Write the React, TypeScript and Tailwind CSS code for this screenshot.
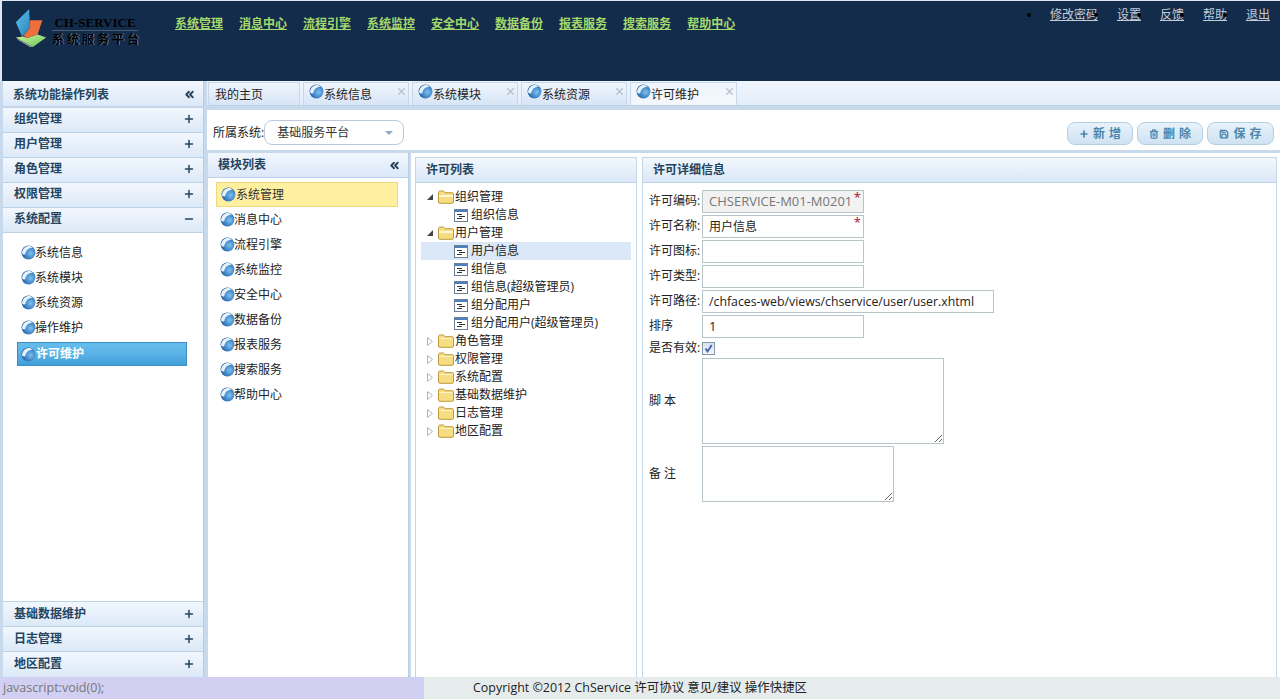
import { useId } from "react";
import type { ReactNode } from "react";
import { ChevronsLeft, Plus, Minus, X, Trash2, Save } from "lucide-react";

function Ball({ size = 15 }: { size?: number }) {
  const id = useId();
  return (
    <svg width={size} height={size} viewBox="0 0 16 16" className="shrink-0">
      <defs>
        <radialGradient id={id} cx="0.65" cy="0.55" r="0.7">
          <stop offset="0" stopColor="#7fc0ee" />
          <stop offset="0.55" stopColor="#3f86c8" />
          <stop offset="1" stopColor="#1d4f8e" />
        </radialGradient>
      </defs>
      <circle cx="8" cy="8" r="7.4" fill={`url(#${id})`} />
      <path d="M1.2 9C1 5 4 1.2 8 1c2 0 3.6.7 4.6 2C9.5 3 5.500 4.500 4.600 9.500 3.500 10.500 2 10.200 1.200 9Z" fill="#e6f2fb" />
    </svg>
  );
}

function Folder({ open }: { open?: boolean }) {
  return (
    <svg width="16" height="14" viewBox="0 0 16 14" className="shrink-0">
      <path d="M.5 3V12c0 .8.5 1.300 1.300 1.300h12.400c.8 0 1.300-.5 1.300-1.300V3.800c0-.7-.5-1.100-1.200-1.100H7L5.600 1H2C1 1 .5 1.800.5 3Z" fill="#f6dc83" stroke="#bd9a3c" />
      {open ? <path d="M1 6h14" stroke="#fff6cf" strokeWidth="2" /> : <path d="M1.500 4.500h13" stroke="#fdf3c6" />}
    </svg>
  );
}

function Leaf() {
  return (
    <svg width="14" height="13" viewBox="0 0 14 13" className="shrink-0">
      <rect x=".5" y=".5" width="13" height="12" fill="#fff" stroke="#6b7f96" />
      <rect x="1" y="1" width="12" height="2" fill="#4b7fbe" />
      <path d="M3 5.500h5M5 7.500h6M3 9.500h5" stroke="#333" />
    </svg>
  );
}

function Logo() {
  return (
    <svg width="36" height="40" viewBox="0 0 38 42" className="shrink-0">
      <defs>
        <linearGradient id="lgb" x1="0" y1="0" x2="1" y2="1">
          <stop offset="0" stopColor="#5cc6f0" />
          <stop offset="1" stopColor="#2c7fb8" />
        </linearGradient>
        <linearGradient id="lgg" x1="0" y1="0" x2="1" y2="1">
          <stop offset="0" stopColor="#d5f59a" />
          <stop offset="1" stopColor="#62c45c" />
        </linearGradient>
      </defs>
      <path d="M3 16 17 2 18 22 9.500 31Z" fill="url(#lgb)" />
      <path d="M18 14H31L26 29 15 33 11 30 18 22Z" fill="#ec6f3c" />
      <path d="M3 32 11 31 15 33 26 29 35 32 21 42Z" fill="url(#lgg)" />
      <path d="M3 32 21 42V44L6 35Z" fill="#8ca3a0" />
    </svg>
  );
}

const navs = ["系统管理", "消息中心", "流程引擎", "系统监控", "安全中心", "数据备份", "报表服务", "搜索服务", "帮助中心"];
const tops = ["修改密码", "设置", "反馈", "帮助", "退出"];

function Header() {
  return (
    <header className="h-[81px] bg-[#132c4b] border-t border-l-2 border-[#dfe6ee] flex shrink-0">
      <div className="w-[173px] flex items-start pl-[11px] pt-[6px] shrink-0">
        <Logo />
        <div className="ml-[3px] pt-[9px] w-[86px] font-['Liberation_Serif','Noto_Sans_CJK_SC',serif]">
          <div className="text-[13px] leading-[14px] font-bold text-black text-center border-b border-[#4a5c72]">CH-SERVICE</div>
          <div className="text-[12px] leading-[15px] mt-[2px] font-bold tracking-[3px] text-black whitespace-nowrap [text-shadow:1px_0_0_#ffffff66]">系统服务平台</div>
        </div>
      </div>
      <nav className="flex gap-4 pt-[15px] h-fit">
        {navs.map((n) => (
          <a key={n} className="text-[12px] leading-[16px] font-bold text-[#a5d96b] underline">{n}</a>
        ))}
      </nav>
      <ul className="ml-auto flex list-disc gap-[11px] pr-[10px] pt-[6px] h-fit text-black">
        {tops.map((t) => (
          <li key={t} className="text-[12px] leading-[16px]">
            <a className="ml-[8px] text-[#c3ccd6] underline">{t}</a>
          </li>
        ))}
      </ul>
    </header>
  );
}

function PanelHead({ title, chev, right }: { title: string; chev?: boolean; right?: boolean }) {
  return (
    <div className="h-[25px] shrink-0 flex items-center justify-between bg-gradient-to-b from-[#f2f7fd] to-[#dae8f8] border-b border-[#bcd3e6] pl-[10px] pr-[7px]">
      <span className={`text-[12px] font-bold text-[#24445e] ${right ? "" : ""}`}>{title}</span>
      {chev && <ChevronsLeft size={13} strokeWidth={3.5} className="text-[#24445e]" />}
    </div>
  );
}

function AccRow({ title, open, up }: { title: string; open?: boolean; up?: boolean }) {
  return (
    <div className={`h-[25px] shrink-0 flex items-center justify-between bg-gradient-to-b from-[#f2f7fd] to-[#dce9f8] border-b border-[#bcd3e6] pl-[11px] pr-[8px] ${up ? "pb-[2px]" : ""}`}>
      <span className="text-[12px] font-bold text-[#24445e]">{title}</span>
      {open ? <Minus size={12} strokeWidth={3} className="text-[#24445e]" /> : <Plus size={12} strokeWidth={3} className="text-[#24445e]" />}
    </div>
  );
}

function Sidebar() {
  const items = ["系统信息", "系统模块", "系统资源", "操作维护"];
  return (
    <aside className="w-[201px] ml-[3px] shrink-0 flex flex-col bg-white border-r border-[#b8cde2]">
      <div className="h-[27px] shrink-0 flex items-center justify-between bg-gradient-to-b from-[#f2f7fd] to-[#dce9f8] border-b-2 border-[#c3d6ea] pl-[10px] pr-[7px] pt-[2px]">
        <span className="text-[12px] font-bold text-[#24445e]">系统功能操作列表</span>
        <ChevronsLeft size={13} strokeWidth={3.5} className="text-[#24445e]" />
      </div>
      {["组织管理", "用户管理", "角色管理", "权限管理"].map((t) => (
        <AccRow key={t} title={t} up />
      ))}
      <AccRow title="系统配置" open up />
      <div className="flex-1 pt-[7px] pl-[14px] pr-[16px] flex flex-col">
        {items.map((t) => (
          <div key={t} className="h-[25px] flex items-center pl-[4px] text-[12px] text-[#222]">
            <Ball />
            <span className="-ml-[1px]">{t}</span>
          </div>
        ))}
        <div className="h-[24px] mt-[2px] flex items-center pl-[3px] text-[12px] font-bold text-white bg-gradient-to-b from-[#66bdec] via-[#5ab2e6] to-[#3f9fda] border border-[#3c8fc6]">
          <Ball />
          <span>许可维护</span>
        </div>
      </div>
      <div className="border-t border-[#bcd3e6] flex flex-col">
        <AccRow title="基础数据维护" />
        <AccRow title="日志管理" />
        <div className="h-[25px] shrink-0 flex items-center justify-between bg-gradient-to-b from-[#f2f7fd] to-[#dce9f8] pl-[11px] pr-[8px] pb-[1px]">
          <span className="text-[12px] font-bold text-[#24445e]">地区配置</span>
          <Plus size={12} strokeWidth={3} className="text-[#24445e]" />
        </div>
      </div>
    </aside>
  );
}

function Tab({ title, icon = true, active, w }: { title: string; icon?: boolean; active?: boolean; w: string }) {
  return (
    <div className={`${w} relative h-[23px] flex items-center shrink-0 border border-b-0 border-[#c6d8ea] ${icon ? "pl-[5px]" : "pl-[6px]"} ${active ? "bg-gradient-to-b from-[#eff5fc] to-[#f4f8fd]" : "bg-gradient-to-b from-[#f0f5fc] to-[#d7e5f6]"}`}>
      {icon && (
        <span className="-mt-[6px] shrink-0">
          <Ball />
        </span>
      )}
      <span className="text-[12px] text-[#222] mt-[1px]">{title}</span>
      {icon && <X size={11} strokeWidth={3} className="absolute right-[1px] top-[3px] text-[#b4c3cf]" />}
    </div>
  );
}

function Btn({ label, icon, w }: { label: string; icon: ReactNode; w: string }) {
  return (
    <button className={`${w} h-[23px] flex items-center justify-center gap-[4px] rounded-lg border border-[#b3cfe0] bg-gradient-to-b from-[#e8f2fb] to-[#cfe2f2] text-[12px] font-bold text-[#4a86ab] tracking-[4px]`}>
      {icon}
      <span className="-mr-[4px]">{label}</span>
    </button>
  );
}

function Toolbar() {
  return (
    <div className="h-[40px] shrink-0 bg-white flex items-center pl-[6px] pr-[6px] mt-[4px]">
      <span className="text-[12px] text-[#222] mt-[6px]">所属系统:</span>
      <div className="w-[140px] h-[25px] mt-[5px] flex items-center justify-between rounded-lg border border-[#b9cbdb] bg-white pl-[12px] pr-[10px]">
        <span className="text-[12px] text-[#333]">基础服务平台</span>
        <span className="w-0 h-0 border-x-[4px] border-x-transparent border-t-[4px] border-t-[#8ea9bf]" />
      </div>
      <div className="ml-auto flex gap-[4px] mt-[7px]">
        <Btn w="w-[66px]" label="新增" icon={<Plus size={10} strokeWidth={4} />} />
        <Btn w="w-[66px]" label="删除" icon={<Trash2 size={10} strokeWidth={3} />} />
        <Btn w="w-[67px]" label="保存" icon={<Save size={10} strokeWidth={3} />} />
      </div>
    </div>
  );
}

function ModuleList() {
  const list = ["消息中心", "流程引擎", "系统监控", "安全中心", "数据备份", "报表服务", "搜索服务", "帮助中心"];
  return (
    <section className="w-[201px] shrink-0 flex flex-col bg-white border-r border-[#b8cde2]">
      <PanelHead title="模块列表" chev />
      <div className="pt-[4px] px-[8px] flex flex-col">
        <div className="h-[25px] w-[182px] flex items-center pl-[4px] bg-[#fff0a0] border border-[#f0d97c] text-[12px] text-[#333]">
          <Ball />
          <span>系统管理</span>
        </div>
        {list.map((t) => (
          <div key={t} className="h-[25px] flex items-center pl-[4px] text-[12px] text-[#222]">
            <Ball />
            <span className="-ml-[1px]">{t}</span>
          </div>
        ))}
      </div>
    </section>
  );
}

function TreeFolder({ title, open }: { title: string; open?: boolean }) {
  return (
    <div className="h-[18px] flex items-center pl-[6px]">
      {open ? (
        <span className="w-0 h-0 border-l-[6px] border-l-transparent border-b-[6px] border-b-[#444] mr-[5px]" />
      ) : (
        <svg width="6" height="9" viewBox="0 0 6 9" className="mr-[5px]">
          <path d="M.5.5 5.500 4.500.5 8.500Z" fill="#fff" stroke="#aab4bd" />
        </svg>
      )}
      <Folder open={open} />
      <span className="ml-[1px] text-[12px] text-[#222]">{title}</span>
    </div>
  );
}

function TreeLeaf({ title, sel }: { title: string; sel?: boolean }) {
  return (
    <div className={`h-[18px] flex items-center pl-[33px] ${sel ? "bg-[#dbe8f8]" : ""}`}>
      <Leaf />
      <span className="ml-[3px] text-[12px] text-[#222]">{title}</span>
    </div>
  );
}

function Tree() {
  return (
    <section className="w-[222px] ml-[4px] mt-[4px] shrink-0 flex flex-col bg-white border border-[#c3d6e8] border-b-0">
      <PanelHead title="许可列表" right />
      <div className="pt-[5px] pl-[5px] pr-[5px] flex flex-col">
        <TreeFolder title="组织管理" open />
        <TreeLeaf title="组织信息" />
        <TreeFolder title="用户管理" open />
        <TreeLeaf title="用户信息" sel />
        <TreeLeaf title="组信息" />
        <TreeLeaf title="组信息(超级管理员)" />
        <TreeLeaf title="组分配用户" />
        <TreeLeaf title="组分配用户(超级管理员)" />
        {["角色管理", "权限管理", "系统配置", "基础数据维护", "日志管理", "地区配置"].map((t) => (
          <TreeFolder key={t} title={t} />
        ))}
      </div>
    </section>
  );
}

function Field({ label, value, wide, req, disabled, size = "text-[12px]" }: { label: string; value?: string; wide?: boolean; req?: boolean; disabled?: boolean; size?: string }) {
  return (
    <div className="flex items-center h-[23px]">
      <span className="w-[53px] shrink-0 pt-[2px] text-[12px] text-[#222]">{label}</span>
      <div className={`relative ${wide ? "w-[292px]" : "w-[162px]"} h-[23px]`}>
        <input
          readOnly
          value={value ?? ""}
          className={`w-full h-full border border-[#b7c5cb] pl-[6px] ${size} outline-none ${disabled ? "bg-[#f2f2f2] text-[#777]" : "bg-white text-[#222]"}`}
        />
        {req && <span className="absolute right-[3px] top-[2px] text-[13px] leading-[14px] text-[#a01030]">*</span>}
      </div>
    </div>
  );
}

function Detail() {
  return (
    <section className="flex-1 ml-[5px] mr-[3px] mt-[4px] flex flex-col bg-white border-l border-t border-r border-[#c3d6e8] min-w-0">
      <PanelHead title="许可详细信息" right />
      <div className="pt-[5px] pl-[6px] flex flex-col gap-[2px]">
        <Field label="许可编码:" value="CHSERVICE-M01-M0201" req disabled size="text-[13px]" />
        <Field label="许可名称:" value="用户信息" req />
        <Field label="许可图标:" />
        <Field label="许可类型:" />
        <Field label="许可路径:" value="/chfaces-web/views/chservice/user/user.xhtml" wide size="text-[12.3px]" />
        <Field label="排序" value="1" size="text-[13px]" />
        <div className="flex items-center h-[16px] mt-[2px]">
          <span className="w-[53px] shrink-0 text-[12px] text-[#222]">是否有效:</span>
          <span className="w-[13px] h-[13px] flex items-center justify-center border border-[#8496aa] bg-gradient-to-b from-[#d9e2ee] to-[#f2f5f9]">
            <svg width="9" height="9" viewBox="0 0 9 9">
              <path d="M1.500 4.500 3.500 7.500 7.800 1" fill="none" stroke="#3f62a8" strokeWidth="1.800" />
            </svg>
          </span>
        </div>
        <div className="flex items-center">
          <span className="w-[53px] shrink-0 text-[12px] text-[#222]">脚 本</span>
          <textarea readOnly className="w-[242px] h-[86px] border border-[#b7c5cb] outline-none bg-white block" />
        </div>
        <div className="flex items-center">
          <span className="w-[53px] shrink-0 text-[12px] text-[#222]">备 注</span>
          <textarea readOnly className="w-[192px] h-[56px] border border-[#b7c5cb] outline-none bg-white block" />
        </div>
      </div>
    </section>
  );
}

export default function App() {
  return (
    <div className="relative w-[1280px] h-[699px] overflow-hidden flex flex-col bg-[#c8d9ec] font-['Open_Sans','Noto_Sans_CJK_SC',sans-serif]">
      <Header />
      <div className="flex-1 flex min-h-0">
        <Sidebar />
        <main className="flex-1 ml-[3px] min-w-0 flex flex-col">
          <div className="h-[25px] shrink-0 flex items-end gap-[3px] pl-[1px] bg-gradient-to-b from-[#eff5fc] to-[#e3edf9] border-b border-[#bcd3e6]">
            <Tab title="我的主页" icon={false} w="w-[92px]" />
            <Tab title="系统信息" w="w-[106px]" />
            <Tab title="系统模块" w="w-[106px]" />
            <Tab title="系统资源" w="w-[106px]" />
            <Tab title="许可维护" w="w-[107px]" active />
          </div>
          <Toolbar />
          <div className="flex-1 mt-[3px] flex min-h-0 pl-[1px]">
            <ModuleList />
            <div className="flex-1 ml-[2px] flex bg-white min-w-0">
              <Tree />
              <Detail />
            </div>
          </div>
        </main>
      </div>
      <footer className="h-[22px] shrink-0 bg-[#e6ecec] pl-[473px] flex items-center text-[12.45px] text-[#222]">
        Copyright ©2012 ChService 许可协议 意见/建议 操作快捷区
      </footer>
      <div className="absolute left-0 bottom-0 w-[424px] h-[22px] bg-[#d2d0f2] flex items-center pl-[3px] text-[12.5px] text-[#777]">
        javascript:void(0);
      </div>
    </div>
  );
}
